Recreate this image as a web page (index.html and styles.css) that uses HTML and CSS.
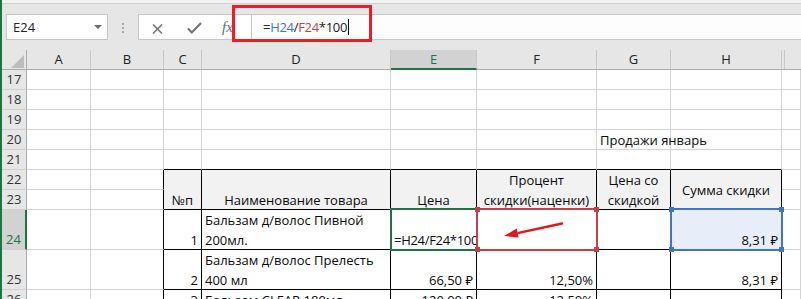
FILE: index.html
```html
<!DOCTYPE html>
<html lang="ru">
<head>
<meta charset="UTF-8">
<meta name="viewport" content="width=device-width, initial-scale=1.0">
<title>Продажи январь</title>
<link rel="stylesheet" href="styles.css">
</head>
<body>
<div class="app">
    <div class="ribbon-edge"></div>

    <!-- строка формул -->
    <div class="formula-bar">
        <div class="name-box"><span>E24</span><span class="caret"></span></div>
        <div class="grip"><i></i><i></i><i></i></div>
        <div class="fx-buttons">
            <svg class="ico-cancel" width="11" height="10" viewBox="0 0 11 10"><path d="M1 0.5L10 9.5M10 0.5L1 9.5"/></svg>
            <svg class="ico-enter" width="15" height="12" viewBox="0 0 15 12"><path d="M1 6.5L4.8 10.4L14 1"/></svg>
            <span class="fx">fx</span>
        </div>
        <div class="formula-input formula">=<span class="ref-h">H24</span>/<span class="ref-f">F24</span>*100<span class="cursor"></span></div>
    </div>
    <div class="callout"></div>

    <!-- лист -->
    <div class="sheet">
        <div class="corner"><i></i></div>
        <div class="ch">A</div>
        <div class="ch">B</div>
        <div class="ch">C</div>
        <div class="ch">D</div>
        <div class="ch sel">E</div>
        <div class="ch">F</div>
        <div class="ch">G</div>
        <div class="ch">H</div>
        <div class="ch gap"></div>

        <div class="rh">17</div>
        <div class="c"></div><div class="c"></div><div class="c"></div><div class="c"></div>
        <div class="c"></div><div class="c"></div><div class="c"></div><div class="c"></div><div class="c"></div>

        <div class="rh">18</div>
        <div class="c"></div><div class="c"></div><div class="c"></div><div class="c"></div>
        <div class="c"></div><div class="c"></div><div class="c"></div><div class="c"></div><div class="c"></div>

        <div class="rh">19</div>
        <div class="c"></div><div class="c"></div><div class="c"></div><div class="c"></div>
        <div class="c"></div><div class="c"></div><div class="c"></div><div class="c"></div><div class="c"></div>

        <div class="rh">20</div>
        <div class="c"></div><div class="c"></div><div class="c"></div><div class="c"></div>
        <div class="c"></div><div class="c"></div>
        <div class="c"><span class="nowrap">Продажи январь</span></div>
        <div class="c"></div><div class="c"></div>

        <div class="rh">21</div>
        <div class="c"></div><div class="c"></div>
        <div class="c bk-b"></div><div class="c bk-b"></div><div class="c bk-b"></div>
        <div class="c bk-b"></div><div class="c bk-b"></div><div class="c bk-b"></div>
        <div class="c"></div>

        <div class="rh">22</div>
        <div class="c"></div><div class="c bk-r"></div>
        <div class="c th bk center"><span>№п</span></div>
        <div class="c th bk center"><span>Наименование товара</span></div>
        <div class="c th bk center"><span>Цена</span></div>
        <div class="c th bk center"><span>Процент<br>скидки(наценки)</span></div>
        <div class="c th bk center"><span>Цена со<br>скидкой</span></div>
        <div class="c th bk center middle"><span>Сумма скидки</span></div>
        <div class="c"></div>

        <div class="rh">23</div>
        <div class="c"></div><div class="c bk-r"></div>
        <div class="c"></div>

        <div class="rh sel">24</div>
        <div class="c"></div><div class="c bk-r"></div>
        <div class="c bk right"><span>1</span></div>
        <div class="c bk"><span>Бальзам д/волос Пивной<br>200мл.</span></div>
        <div class="c bk"><span class="nowrap formula">=H24/F24*100</span></div>
        <div class="c bk"></div>
        <div class="c bk"></div>
        <div class="c bk right ref-fill"><span>8,31 ₽</span></div>
        <div class="c"></div>

        <div class="rh">25</div>
        <div class="c"></div><div class="c bk-r"></div>
        <div class="c bk right"><span>2</span></div>
        <div class="c bk"><span>Бальзам д/волос Прелесть<br>400 мл</span></div>
        <div class="c bk right"><span>66,50 ₽</span></div>
        <div class="c bk right"><span>12,50%</span></div>
        <div class="c bk"></div>
        <div class="c bk right"><span>8,31 ₽</span></div>
        <div class="c"></div>

        <div class="rh">26</div>
        <div class="c"></div><div class="c bk-r"></div>
        <div class="c bk right"><span>3</span></div>
        <div class="c bk"><span>Бальзам CLEAR 180мл</span></div>
        <div class="c bk right"><span>120,00 ₽</span></div>
        <div class="c bk right"><span>12,50%</span></div>
        <div class="c bk"></div>
        <div class="c bk"></div>
        <div class="c"></div>
    </div>

    <!-- выделения ссылок формулы -->
    <div class="frame frame-edit"></div>
    <div class="frame frame-f"><i class="tl"></i><i class="tr"></i><i class="bl"></i><i class="br"></i></div>
    <div class="frame frame-h"><i class="tl"></i><i class="tr"></i><i class="bl"></i><i class="br"></i></div>

    <svg class="arrow" width="66" height="24" viewBox="0 0 66 24">
        <path d="M62 5.5L18.5 14.9" stroke="#e3161b" stroke-width="2.5" stroke-linecap="round" fill="none"/>
        <path d="M4 18L18.6 19.5L16.7 10.6Z" fill="#e3161b"/>
    </svg>
</div>
</body>
</html>
```

FILE: styles.css
```css
* {
    box-sizing: border-box;
}

body {
    margin: 0;
    background: #fff;
    font-family: "Open Sans", "Noto Sans", sans-serif;
    overflow: hidden;
}

.app {
    position: relative;
    width: 801px;
    height: 299px;
    overflow: hidden;
    padding-left: 2px;
    background: #217346;
}

.ribbon-edge {
    height: 4px;
    background: #f3f3f3;
    border-bottom: 1px solid #d2d2d2;
}

/* строка формул */
.formula-bar {
    display: flex;
    align-items: flex-start;
    height: 46px;
    padding: 10px 0 0 4px;
    background: #e6e6e6;
}

.name-box {
    display: flex;
    align-items: center;
    justify-content: space-between;
    width: 102px;
    height: 26px;
    padding: 0 5px 0 6px;
    background: #fff;
    border: 1px solid #c6c6c6;
    font-size: 13px;
    color: #222;
}

.caret {
    border-left: 4px solid transparent;
    border-right: 4px solid transparent;
    border-top: 4px solid #6a6a6a;
}

.grip {
    display: flex;
    flex-direction: column;
    align-items: center;
    gap: 2px;
    width: 30px;
    padding-top: 9px;
}

.grip i {
    width: 2px;
    height: 2px;
    background: #a8a8a8;
}

.fx-buttons {
    display: flex;
    align-items: center;
    width: 113px;
    height: 26px;
    background: #fff;
    border: 1px solid #c6c6c6;
    border-right: 0;
}

.fx-buttons svg path {
    fill: none;
    stroke: #767676;
    stroke-width: 1.6;
}

.ico-cancel {
    margin: 3px 0 0 13px;
}

.ico-enter {
    margin: 1px 0 0 24px;
}

.ico-enter path {
    stroke-width: 2.2 !important;
}

.fx {
    margin-left: 20px;
    font-family: "Liberation Serif", serif;
    font-style: italic;
    font-size: 15px;
    color: #6b6b6b;
}

.formula-input {
    flex: 1;
    height: 26px;
    padding-left: 11px;
    background: #fdfdfd;
    border: 1px solid #c6c6c6;
    border-right: 0;
    font-size: 13px;
    line-height: 24px;
    color: #222;
    white-space: nowrap;
}

.formula {
    letter-spacing: -0.3px;
}

.ref-h {
    color: #3f74c9;
}

.ref-f {
    color: #d0404c;
}

.cursor {
    display: inline-block;
    width: 1px;
    height: 16px;
    margin-left: 1px;
    background: #000;
    vertical-align: -3px;
}

.callout {
    position: absolute;
    left: 232px;
    top: 5px;
    width: 140px;
    height: 37px;
    border: 3px solid #ee1c25;
}

/* лист */
.sheet {
    display: grid;
    grid-template-columns: 25px 64px 73px 38px 189px 86px 120px 74px 111px 1fr;
    grid-template-rows: 20px repeat(7, 20px) 40px 40px 20px;
    background: #fff;
    font-size: 13px;
    color: #0a0a0a;
}

.corner {
    display: flex;
    justify-content: flex-end;
    align-items: flex-end;
    padding: 0 2px 1px 0;
    background: #e6e6e6;
    border-right: 1px solid #ababab;
    border-bottom: 1px solid #ababab;
}

.corner i {
    width: 13px;
    height: 13px;
    background: #bdbdbd;
    clip-path: polygon(100% 0, 100% 100%, 0 100%);
}

.ch {
    background: #e6e6e6;
    border-right: 1px solid #c8c8c8;
    border-bottom: 1px solid #ababab;
    text-align: center;
    line-height: 19px;
    color: #222;
}

.ch.sel {
    background: #d2d2d2;
    color: #217346;
    border-bottom: 2px solid #217346;
}

.ch.gap {
    border-right: 0;
    background: linear-gradient(to right, #e6e6e6 2px, #c8c8c8 2px, #c8c8c8 3px, #e6e6e6 3px);
}

.rh {
    display: flex;
    align-items: flex-end;
    justify-content: center;
    background: #e6e6e6;
    border-right: 1px solid #ababab;
    border-bottom: 1px solid #d0d0d0;
    line-height: 19px;
    color: #333;
}

.rh.sel {
    background: #d2d2d2;
    color: #217346;
    border-right: 2px solid #217346;
}

.c {
    display: flex;
    align-items: flex-end;
    padding: 0 3px;
    border-right: 1px solid #d4d4d4;
    border-bottom: 1px solid #d4d4d4;
    line-height: 20px;
}

.c span {
    margin-bottom: -1px;
}

.c.right {
    justify-content: flex-end;
    text-align: right;
}

.c.center {
    justify-content: center;
    text-align: center;
}

.c.middle {
    align-items: center;
}

.c.middle span {
    margin-bottom: 0;
}

.nowrap {
    white-space: nowrap;
}

.th {
    grid-row: span 2;
    background: #f2f2f2;
}

.bk {
    border-right-color: #000;
    border-bottom-color: #000;
}

.bk-r {
    border-right-color: #000;
}

.bk-b {
    border-bottom-color: #000;
}

.ref-fill {
    background: #e8eef9;
}

/* рамки ссылок */
.frame {
    position: absolute;
    top: 208px;
    height: 43px;
    border: 2px solid currentColor;
}

.frame i {
    position: absolute;
    width: 5px;
    height: 5px;
    background: currentColor;
}

.frame .tl { left: -3px; top: -3px; }
.frame .tr { right: -3px; top: -3px; }
.frame .bl { left: -3px; bottom: -3px; }
.frame .br { right: -3px; bottom: -3px; }

.frame-edit {
    left: 390px;
    width: 88px;
    color: #217346;
}

.frame-f {
    left: 476px;
    width: 122px;
    color: #c3404d;
}

.frame-h {
    left: 670px;
    width: 113px;
    color: #4472c4;
}

.arrow {
    position: absolute;
    left: 500px;
    top: 218px;
}
```
